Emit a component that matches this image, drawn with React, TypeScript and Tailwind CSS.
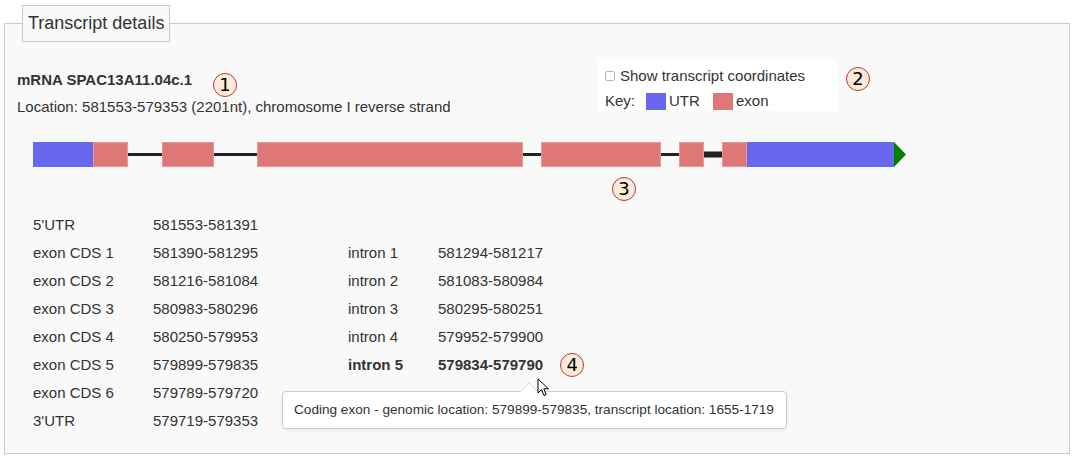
import React from 'react';

const font = { fontFamily: '"Liberation Sans", Arial, sans-serif' };

const rows: [string, string, string, string, boolean?][] = [
    ["5'UTR", '581553-581391', '', ''],
    ['exon CDS 1', '581390-581295', 'intron 1', '581294-581217'],
    ['exon CDS 2', '581216-581084', 'intron 2', '581083-580984'],
    ['exon CDS 3', '580983-580296', 'intron 3', '580295-580251'],
    ['exon CDS 4', '580250-579953', 'intron 4', '579952-579900'],
    ['exon CDS 5', '579899-579835', 'intron 5', '579834-579790', true],
    ['exon CDS 6', '579789-579720', '', ''],
    ["3'UTR", '579719-579353', '', ''],
];

// gene model, x relative to the start of the bar
const blocks = [
    { x: 0, w: 60, kind: 'utr' },
    { x: 60, w: 35, kind: 'exon' },
    { x: 129, w: 52, kind: 'exon' },
    { x: 224, w: 266, kind: 'exon' },
    { x: 508, w: 120, kind: 'exon' },
    { x: 646, w: 25, kind: 'exon' },
    { x: 689, w: 25, kind: 'exon' },
    { x: 714, w: 147, kind: 'utr' },
];

const introns = [
    { x: 95, w: 34, thick: false },
    { x: 181, w: 43, thick: false },
    { x: 490, w: 18, thick: false },
    { x: 628, w: 18, thick: false },
    { x: 671, w: 18, thick: true },
];

function Marker({ n, className = '' }: { n: number; className?: string }) {
    return (
        <span
            className={`inline-flex w-[24px] h-[24px] shrink-0 items-center justify-center rounded-full border border-[#b13b3b] bg-[#fdebd9] text-[18px] font-normal leading-none text-black ${className}`}
            style={{ fontFamily: '"DejaVu Sans", sans-serif' }}
        >
            {n}
        </span>
    );
}

function GeneBar() {
    return (
        <svg width="880" height="25" className="block ml-[16px]">
            {introns.map((i) => (
                <rect
                    key={i.x}
                    x={i.x}
                    y={i.thick ? 9.5 : 11}
                    width={i.w}
                    height={i.thick ? 6 : 3}
                    fill="#222"
                />
            ))}
            {blocks.map((b) => (
                <rect
                    key={b.x}
                    x={b.x + 0.5}
                    y={0.5}
                    width={b.w - 1}
                    height={24}
                    fill={b.kind === 'utr' ? '#6868ee' : '#df7776'}
                    stroke={b.kind === 'utr' ? '#6868ee' : '#e49a99'}
                    strokeWidth={1}
                />
            ))}
            <polygon points="861,0 873,12.5 861,25" fill="#008000" />
        </svg>
    );
}

export default function App() {
    return (
        <div className="bg-white w-[1079px] h-[464px] text-[#333] text-[15px]" style={font}>
            <fieldset className="ml-[4px] mt-[5px] w-[1066px] border border-[#ccc] bg-[#f9f9f9] px-[12px] pb-[18px]">
                <legend className="ml-[5px] px-[5px] h-[37px] border border-[#ccc] bg-[#f9f9f9] text-[18px] leading-[35px] text-[#333]">
                    Transcript details
                </legend>

                <div className="flex mt-[18px]">
                    <div className="w-[581px] pt-[10px]">
                        <div className="flex items-start h-[20px]">
                            <span className="font-bold leading-5">mRNA SPAC13A11.04c.1</span>
                            <Marker n={1} className="ml-[21px] mt-[3px]" />
                        </div>
                        <div className="mt-[7px] leading-5 whitespace-nowrap">
                            Location: 581553-579353 (2201nt), chromosome I reverse strand
                        </div>
                    </div>
                    <div className="w-[239px] h-[51px] bg-white px-[7px] pt-[6px]">
                        <div className="flex items-center h-[20px]">
                            <span className="w-[10px] h-[10px] rounded-[2px] border border-[#b5b5b5] bg-white mr-[5px]" />
                            <span className="leading-5 whitespace-nowrap">Show transcript coordinates</span>
                        </div>
                        <div className="flex items-center h-[20px] mt-[5px]">
                            <span className="leading-5 w-[41px]">Key:</span>
                            <span className="w-[20px] h-[17px] bg-[#6868ee] mr-[3px]" />
                            <span className="leading-5 w-[44px]">UTR</span>
                            <span className="w-[20px] h-[17px] bg-[#df7776] mr-[3px]" />
                            <span className="leading-5">exon</span>
                        </div>
                    </div>
                    <Marker n={2} className="ml-[9px] mt-[7px]" />
                </div>

                <div className="mt-[25px]">
                    <GeneBar />
                </div>

                <Marker n={3} className="ml-[595px] mt-[10px]" />

                <div className="relative ml-[16px] mt-[9px]">
                    <div className="grid grid-cols-[120px_195px_90px_1fr]">
                        {rows.map(([a, b, c, d, bold]) => (
                            <React.Fragment key={a}>
                                <div className="h-[28px] leading-[28px] whitespace-nowrap">{a}</div>
                                <div className="h-[28px] leading-[28px]">{b}</div>
                                <div className={`h-[28px] leading-[28px] whitespace-nowrap ${bold ? 'font-bold' : ''}`}>{c}</div>
                                <div className={`h-[28px] flex items-center ${bold ? 'font-bold' : ''}`}>
                                    <span className="leading-[28px]">{d}</span>
                                    {bold && <Marker n={4} className="ml-[17px]" />}
                                </div>
                            </React.Fragment>
                        ))}
                    </div>

                    <div className="absolute left-[249px] top-[180px] w-[505px] h-[38px] rounded-[4px] border border-[#ccc] bg-white shadow-[0_1px_3px_rgba(0,0,0,0.08)] px-[11px] text-[13.6px] leading-[36px] whitespace-nowrap text-[#333]">
                        <svg width="18" height="10" className="absolute left-[237px] top-[-10px]">
                            <polygon points="0,10 9,1 18,10" fill="#fff" />
                            <polyline points="0,10 9,1 18,10" fill="none" stroke="#ddd" strokeWidth="1" />
                        </svg>
                        Coding exon - genomic location: 579899-579835, transcript location: 1655-1719
                        <svg width="13" height="20" className="absolute left-[254px] top-[-14px]" viewBox="0 0 13 20">
                            <path
                                d="M1 1 L1 15 L4.5 11.5 L7 17.5 L9.2 16.6 L6.8 10.8 L11.5 10.8 Z"
                                fill="#fff"
                                stroke="#000"
                                strokeWidth="1"
                                strokeLinejoin="round"
                            />
                        </svg>
                    </div>
                </div>
            </fieldset>
        </div>
    );
}
